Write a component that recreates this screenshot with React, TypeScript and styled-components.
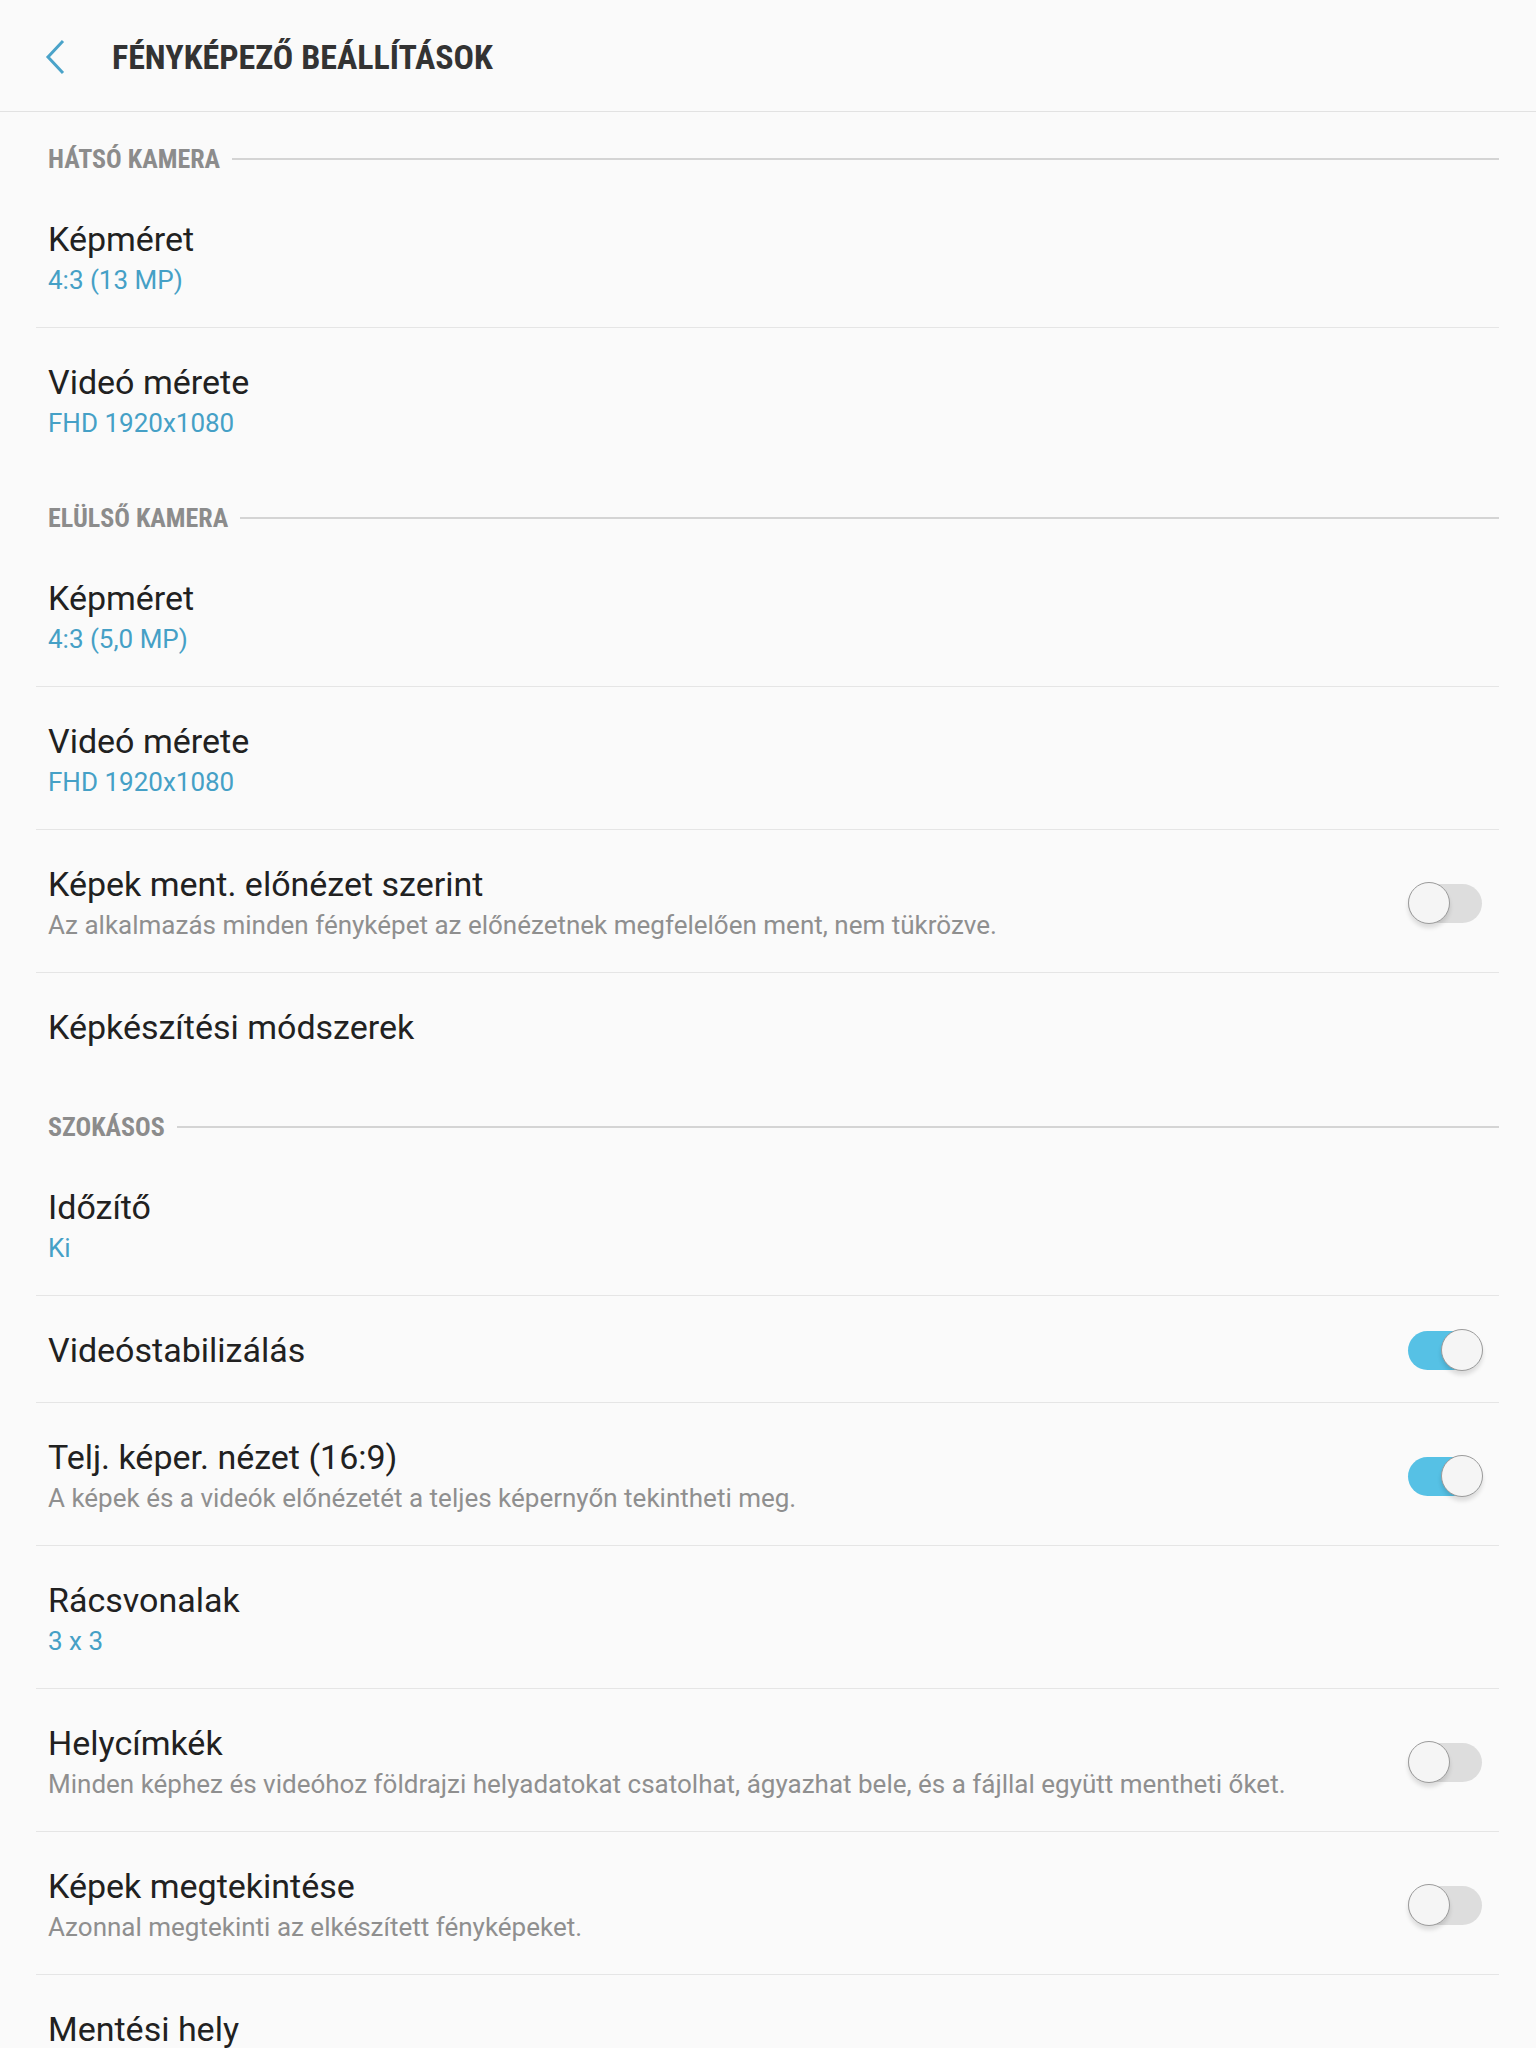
import React from "react";
import styled, { createGlobalStyle } from "styled-components";

const Global = createGlobalStyle`
  html, body { margin: 0; padding: 0; background: #fafafa; }
  body { font-family: Roboto, "Noto Sans", sans-serif; -webkit-font-smoothing: antialiased; }
`;

const Page = styled.div`
  width: 1536px;
  min-height: 2048px;
  background: #fafafa;
  overflow: hidden;
`;

const Header = styled.header`
  height: 112px;
  display: flex;
  align-items: center;
  padding-left: 44px;
  padding-top: 2px;
  box-sizing: border-box;
  border-bottom: 1px solid #e2e2e2;
`;

const BackButton = styled.div`
  width: 22px;
  height: 36px;
  display: flex;
  align-items: center;
  margin-right: 46px;
`;

const Title = styled.h1`
  margin: 0;
  font-family: "Roboto Condensed", Roboto, sans-serif;
  font-weight: 700;
  font-size: 34px;
  color: #333333;
  white-space: nowrap;
`;

const List = styled.main`
  padding: 0 37px 0 36px;
`;

const SectionHead = styled.div`
  display: flex;
  align-items: center;
  gap: 12px;
  height: 73px;
  padding: 32px 0 11px 12px;
  box-sizing: border-box;
`;

const SectionLabel = styled.span`
  font-family: "Roboto Condensed", Roboto, sans-serif;
  font-weight: 700;
  font-size: 26px;
  line-height: 30px;
  color: #8c8c8c;
  white-space: nowrap;
`;

const SectionLine = styled.div`
  flex: 1;
  height: 2px;
  background: #d4d4d4;
`;

const Row = styled.div<{ $divider: boolean; $two: boolean }>`
  display: flex;
  align-items: center;
  padding: ${(p) => (p.$two ? "33px 17px 28px 12px" : "33px 17px 31px 12px")};
  border-bottom: ${(p) => (p.$divider ? "1px solid #e5e5e5" : "1px solid transparent")};
`;

const Texts = styled.div`
  flex: 1;
  display: flex;
  flex-direction: column;
  min-width: 0;
`;

const RowTitle = styled.div`
  font-size: 34px;
  line-height: 42px;
  color: #212121;
`;

const RowSub = styled.div<{ $accent: boolean }>`
  margin-top: 1px;
  font-size: 26px;
  line-height: 38px;
  color: ${(p) => (p.$accent ? "#45a0c6" : "#8f8f8f")};
`;

const Track = styled.div<{ $on: boolean }>`
  position: relative;
  width: 74px;
  height: 39px;
  border-radius: 20px;
  background: ${(p) => (p.$on ? "#56c1e5" : "#dddddd")};
  flex-shrink: 0;
`;

const Knob = styled.div<{ $on: boolean }>`
  position: absolute;
  top: -2px;
  ${(p) => (p.$on ? "right: -1px;" : "left: 0;")}
  width: 42px;
  height: 42px;
  box-sizing: border-box;
  border-radius: 50%;
  background: #f5f5f5;
  border: 1.5px solid #9b9b9b;
  box-shadow: 0 4px 4px rgba(0, 0, 0, 0.12);
`;

const Toggle = ({ on }: { on: boolean }) => (
  <Track $on={on}>
    <Knob $on={on} />
  </Track>
);

type Item =
  | { kind: "section"; label: string }
  | {
      kind: "row";
      title: string;
      sub?: string;
      accent?: boolean;
      toggle?: boolean;
      divider?: boolean;
    };

const items: Item[] = [
  { kind: "section", label: "HÁTSÓ KAMERA" },
  { kind: "row", title: "Képméret", sub: "4:3 (13 MP)", accent: true, divider: true },
  { kind: "row", title: "Videó mérete", sub: "FHD 1920x1080", accent: true },
  { kind: "section", label: "ELÜLSŐ KAMERA" },
  { kind: "row", title: "Képméret", sub: "4:3 (5,0 MP)", accent: true, divider: true },
  { kind: "row", title: "Videó mérete", sub: "FHD 1920x1080", accent: true, divider: true },
  {
    kind: "row",
    title: "Képek ment. előnézet szerint",
    sub: "Az alkalmazás minden fényképet az előnézetnek megfelelően ment, nem tükrözve.",
    toggle: false,
    divider: true,
  },
  { kind: "row", title: "Képkészítési módszerek" },
  { kind: "section", label: "SZOKÁSOS" },
  { kind: "row", title: "Időzítő", sub: "Ki", accent: true, divider: true },
  { kind: "row", title: "Videóstabilizálás", toggle: true, divider: true },
  {
    kind: "row",
    title: "Telj. képer. nézet (16:9)",
    sub: "A képek és a videók előnézetét a teljes képernyőn tekintheti meg.",
    toggle: true,
    divider: true,
  },
  { kind: "row", title: "Rácsvonalak", sub: "3 x 3", accent: true, divider: true },
  {
    kind: "row",
    title: "Helycímkék",
    sub: "Minden képhez és videóhoz földrajzi helyadatokat csatolhat, ágyazhat bele, és a fájllal együtt mentheti őket.",
    toggle: false,
    divider: true,
  },
  {
    kind: "row",
    title: "Képek megtekintése",
    sub: "Azonnal megtekinti az elkészített fényképeket.",
    toggle: false,
    divider: true,
  },
  { kind: "row", title: "Mentési hely" },
];

export default function App() {
  return (
    <Page>
      <Global />
      <Header>
        <BackButton>
          <svg width="22" height="36" viewBox="0 0 22 36" fill="none">
            <path d="M19 2 L4 18 L19 34" stroke="#4aa3c9" strokeWidth="3" />
          </svg>
        </BackButton>
        <Title>FÉNYKÉPEZŐ BEÁLLÍTÁSOK</Title>
      </Header>
      <List>
        {items.map((it, i) =>
          it.kind === "section" ? (
            <SectionHead key={i}>
              <SectionLabel>{it.label}</SectionLabel>
              <SectionLine />
            </SectionHead>
          ) : (
            <Row key={i} $divider={!!it.divider} $two={!!it.sub}>
              <Texts>
                <RowTitle>{it.title}</RowTitle>
                {it.sub && <RowSub $accent={!!it.accent}>{it.sub}</RowSub>}
              </Texts>
              {it.toggle !== undefined && <Toggle on={it.toggle} />}
            </Row>
          )
        )}
      </List>
    </Page>
  );
}
